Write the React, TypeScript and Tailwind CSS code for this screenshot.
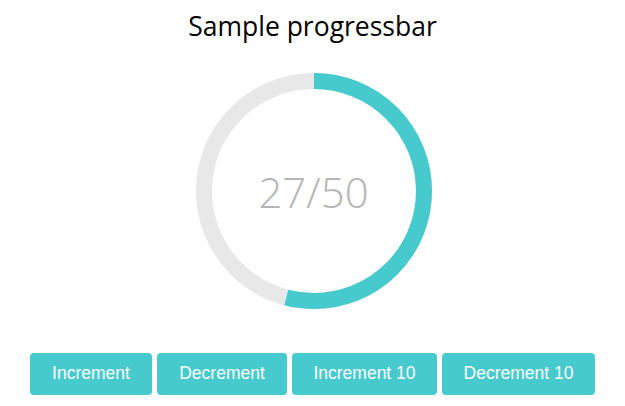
import { useState } from 'react'

const MAX = 50
const R = 110
const C = 2 * Math.PI * R

export default function App() {
  const [value, setValue] = useState(27)

  const clamp = (n: number) => Math.max(0, Math.min(MAX, n))
  const pct = value / MAX

  const buttons = [
    { label: 'Increment', w: 'w-[122px]', delta: 1 },
    { label: 'Decrement', w: 'w-[130px]', delta: -1 },
    { label: 'Increment 10', w: 'w-[145px]', delta: 10 },
    { label: 'Decrement 10', w: 'w-[153px]', delta: -10 },
  ]

  return (
    <div className="w-[625px] h-[406px] bg-white flex flex-col items-center font-['Open_Sans',sans-serif]">
      {/* Title */}
      <h1 className="mt-[10px] text-[26.5px] leading-[33px] text-black">Sample progressbar</h1>

      {/* Circle */}
      <div className="relative mt-[30px] w-[236px] h-[236px] ml-[2px]">
        <svg width="236" height="236" viewBox="0 0 236 236" className="-rotate-90">
          <circle cx="118" cy="118" r={R} fill="none" stroke="#e8e8e8" strokeWidth="16" />
          <circle
            cx="118" cy="118" r={R} fill="none" stroke="#47cacd" strokeWidth="16"
            strokeDasharray={C}
            strokeDashoffset={C * (1 - pct)}
          />
        </svg>
        <div className="absolute inset-0 flex items-center justify-center text-[42px] font-light text-[#b5b5b5]">
          {value}/{MAX}
        </div>
      </div>

      {/* Action row */}
      <div className="mt-[44px] flex gap-[5px] font-['Liberation_Sans',Arial,sans-serif]">
        {buttons.map(b => (
          <button
            key={b.label}
            onClick={() => setValue(v => clamp(v + b.delta))}
            className={`${b.w} h-[42px] rounded-[4px] bg-[#47cacd] text-white text-[17.5px] pb-[2px]`}
          >
            {b.label}
          </button>
        ))}
      </div>
    </div>
  )
}
